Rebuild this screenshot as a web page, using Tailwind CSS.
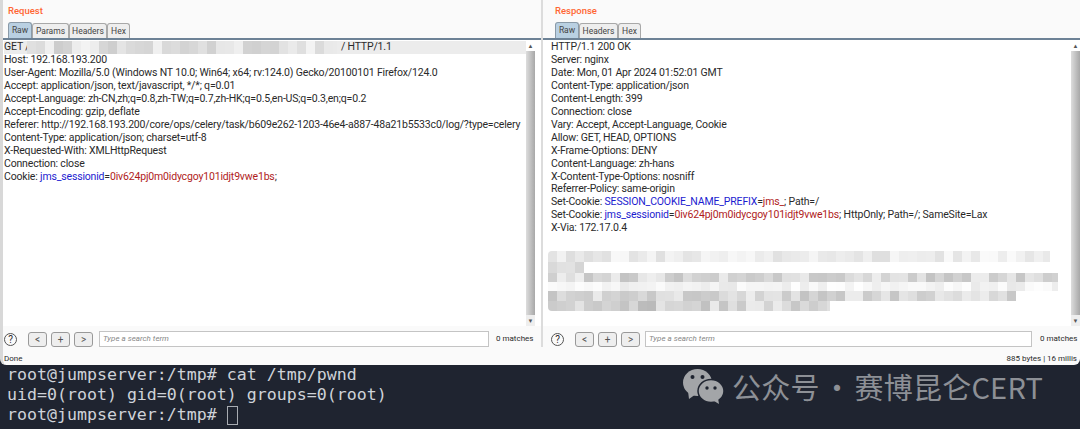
<!DOCTYPE html>
<html>
<head>
<meta charset="utf-8">
<script src="https://cdn.jsdelivr.net/npm/@tailwindcss/browser@4"></script>
</head>
<body class="w-[1080px] h-[429px] overflow-hidden bg-[#1f2430]">
<div class="relative flex flex-col h-[429px]">
  <!-- burp panels -->
  <div class="h-[365px] shrink-0 bg-[#fafafa] rounded-b-[6px] flex font-['Roboto'] text-[#2a2a2a] border-l-[3px] border-[#d8d8d8] overflow-hidden">
    <!-- request -->
    <div class="w-[538px] flex flex-col">
      <div class="h-[22px] pl-[5px] pt-[4px] text-[9.5px] font-medium text-[#ff6633]">Request</div>
      <div class="h-[16px] pl-[5px] flex items-end text-[8.5px] text-[#444]">
        <div class="h-[16px] w-[24px] flex items-center justify-center border border-[#8a9aa8] border-b-0 rounded-t-[3px] bg-[#b9d0e2]">Raw</div>
        <div class="h-[15px] w-[37px] flex items-center justify-center border border-[#a8a8a8] border-b-0 rounded-t-[3px] bg-[#eeeeee]">Params</div>
        <div class="h-[15px] w-[38px] flex items-center justify-center border border-[#a8a8a8] border-b-0 rounded-t-[3px] bg-[#eeeeee]">Headers</div>
        <div class="h-[15px] w-[23px] flex items-center justify-center border border-[#a8a8a8] border-b-0 rounded-t-[3px] bg-[#eeeeee]">Hex</div>
      </div>
      <div class="h-[2px] bg-[#6d8296]"></div>
      <div class="flex flex-1 relative bg-white">
        <div class="flex-1 pl-[1px] pt-[1px] text-[10.5px] tracking-[-0.17px] leading-[12.95px] whitespace-nowrap overflow-hidden">
          <div class="bg-[#ececec] h-[13px]">GET /a<span class="inline-block w-[306px]"></span>/ HTTP/1.1</div>
          <div>Host: 192.168.193.200</div>
          <div>User-Agent: Mozilla/5.0 (Windows NT 10.0; Win64; x64; rv:124.0) Gecko/20100101 Firefox/124.0</div>
          <div>Accept: application/json, text/javascript, */*; q=0.01</div>
          <div>Accept-Language: zh-CN,zh;q=0.8,zh-TW;q=0.7,zh-HK;q=0.5,en-US;q=0.3,en;q=0.2</div>
          <div>Accept-Encoding: gzip, deflate</div>
          <div>Referer: http://192.168.193.200/core/ops/celery/task/b609e262-1203-46e4-a887-48a21b5533c0/log/?type=celery</div>
          <div>Content-Type: application/json; charset=utf-8</div>
          <div>X-Requested-With: XMLHttpRequest</div>
          <div>Connection: close</div>
          <div>Cookie: <span class="text-[#1c1cd0]">jms_sessionid</span>=<span class="text-[#b01c1c]">0iv624pj0m0idycgoy101idjt9vwe1bs</span>;</div>
        </div>
        <div class="w-[9px] mr-[6px] flex flex-col">
          <div class="h-[11px] bg-white text-[6px] leading-[11px] text-center text-[#555]">▲</div>
          <div class="flex-1 bg-linear-to-r from-[#dddddd] to-[#a8a8a8]"></div>
          <div class="h-[11px] bg-[#eeeeee] text-[6px] leading-[11px] text-center text-[#555]">▼</div>
        </div>
      </div>
      <div class="h-[26px] flex items-center text-[8px]">
        <div class="w-[13px] h-[13px] ml-[1px] rounded-full border border-[#555] text-[10px] leading-[11px] text-center">?</div>
        <div class="ml-[11px] flex gap-[4px] text-[10px] text-[#555]">
          <div class="w-[19px] h-[15px] border border-[#999] rounded-[3px] bg-[#eeeeee] text-center leading-[13px]">&lt;</div>
          <div class="w-[19px] h-[15px] border border-[#999] rounded-[3px] bg-[#eeeeee] text-center leading-[13px]">+</div>
          <div class="w-[19px] h-[15px] border border-[#999] rounded-[3px] bg-[#eeeeee] text-center leading-[13px]">&gt;</div>
        </div>
        <div class="ml-[6px] w-[390px] h-[16px] border border-[#c4c4c4] bg-white pl-[3px] italic text-[#888] leading-[14px]">Type a search term</div>
        <div class="ml-[7px]">0 matches</div>
      </div>
      <div class="pl-[1px] text-[8px] pt-[1px]">Done</div>
    </div>
    <!-- divider -->
    <div class="w-[2px] h-[347px] bg-[#dcdcdc]"></div>
    <!-- response -->
    <div class="flex-1 flex flex-col">
      <div class="h-[22px] pl-[12px] pt-[4px] text-[9.5px] font-medium text-[#ff6633]">Response</div>
      <div class="h-[16px] pl-[12px] flex items-end text-[8.5px] text-[#444]">
        <div class="h-[16px] w-[24px] flex items-center justify-center border border-[#8a9aa8] border-b-0 rounded-t-[3px] bg-[#b9d0e2]">Raw</div>
        <div class="h-[15px] w-[39px] flex items-center justify-center border border-[#a8a8a8] border-b-0 rounded-t-[3px] bg-[#eeeeee]">Headers</div>
        <div class="h-[15px] w-[23px] flex items-center justify-center border border-[#a8a8a8] border-b-0 rounded-t-[3px] bg-[#eeeeee]">Hex</div>
      </div>
      <div class="h-[2px] bg-[#6d8296]"></div>
      <div class="flex flex-1 relative bg-white">
        <div class="flex-1 pl-[8px] pt-[1px] text-[10.5px] tracking-[-0.17px] leading-[12.95px] whitespace-nowrap overflow-hidden">
          <div>HTTP/1.1 200 OK</div>
          <div>Server: nginx</div>
          <div>Date: Mon, 01 Apr 2024 01:52:01 GMT</div>
          <div>Content-Type: application/json</div>
          <div>Content-Length: 399</div>
          <div>Connection: close</div>
          <div>Vary: Accept, Accept-Language, Cookie</div>
          <div>Allow: GET, HEAD, OPTIONS</div>
          <div>X-Frame-Options: DENY</div>
          <div>Content-Language: zh-hans</div>
          <div>X-Content-Type-Options: nosniff</div>
          <div>Referrer-Policy: same-origin</div>
          <div>Set-Cookie: <span class="text-[#1c1cd0]">SESSION_COOKIE_NAME_PREFIX</span>=<span class="text-[#b01c1c]">jms_</span>; Path=/</div>
          <div>Set-Cookie: <span class="text-[#1c1cd0]">jms_sessionid</span>=<span class="text-[#b01c1c]">0iv624pj0m0idycgoy101idjt9vwe1bs</span>; HttpOnly; Path=/; SameSite=Lax</div>
          <div>X-Via: 172.17.0.4</div>
        </div>
        <div class="w-[9px] flex flex-col">
          <div class="h-[11px] bg-white text-[6px] leading-[11px] text-center text-[#555]">▲</div>
          <div class="flex-1 bg-linear-to-r from-[#dddddd] to-[#a8a8a8]"></div>
          <div class="h-[11px] bg-[#eeeeee] text-[6px] leading-[11px] text-center text-[#555]">▼</div>
        </div>
      </div>
      <div class="h-[26px] flex items-center text-[8px]">
        <div class="w-[13px] h-[13px] ml-[8px] rounded-full border border-[#555] text-[10px] leading-[11px] text-center">?</div>
        <div class="ml-[11px] flex gap-[4px] text-[10px] text-[#555]">
          <div class="w-[19px] h-[15px] border border-[#999] rounded-[3px] bg-[#eeeeee] text-center leading-[13px]">&lt;</div>
          <div class="w-[19px] h-[15px] border border-[#999] rounded-[3px] bg-[#eeeeee] text-center leading-[13px]">+</div>
          <div class="w-[19px] h-[15px] border border-[#999] rounded-[3px] bg-[#eeeeee] text-center leading-[13px]">&gt;</div>
        </div>
        <div class="ml-[5px] w-[387px] h-[16px] border border-[#c4c4c4] bg-white pl-[3px] italic text-[#888] leading-[14px]">Type a search term</div>
        <div class="ml-[8px]">0 matches</div>
      </div>
      <div class="pr-[3px] text-right text-[8px] pt-[1px]">885 bytes | 16 millis</div>
    </div>
  </div>

  <!-- terminal -->
  <div class="flex-1 pl-[7px] font-['DejaVu_Sans_Mono'] text-[16.6px] leading-[20px] text-[#cfd3d9]">
    <div class="whitespace-pre">root@jumpserver:/tmp# cat /tmp/pwnd</div>
    <div class="whitespace-pre">uid=0(root) gid=0(root) groups=0(root)</div>
    <div class="whitespace-pre flex items-center">root@jumpserver:/tmp# <span class="inline-block w-[11px] h-[19px] border border-[#a8acb2]"></span></div>
  </div>

  <!-- watermark -->
  <div class="absolute left-[683px] top-[368px] flex items-center gap-[8px] text-[#8d9096]">
    <svg width="41" height="36" viewBox="0 0 41 36">
      <ellipse cx="14.500" cy="14.500" rx="14.500" ry="13.500" fill="#a3a5a8"/>
      <path d="M5 23l1 8 7-5z" fill="#a3a5a8"/>
      <ellipse cx="28" cy="23" rx="13" ry="11.500" fill="#a3a5a8" stroke="#1f2430" stroke-width="1.500"/>
      <path d="M31 33l5 3-1-6z" fill="#a3a5a8"/>
      <circle cx="9.500" cy="9" r="2" fill="#1f2430"/><circle cx="19.500" cy="9" r="2" fill="#1f2430"/>
      <circle cx="24" cy="20" r="1.700" fill="#1f2430"/><circle cx="32" cy="20" r="1.700" fill="#1f2430"/>
    </svg>
    <span class="font-['Noto_Sans_CJK_SC','Noto_Sans',sans-serif] text-[29px] leading-[33px] tracking-[0.2px] whitespace-nowrap">公众号<span class="inline-block w-[35px] text-center">·</span>赛博昆仑CERT</span>
  </div>

  <!-- redactions -->
  <div id="r1" class="absolute left-[27px] top-[41px] w-[310px] h-[13px] overflow-hidden flex"></div>
  <div id="r2" class="absolute left-[548px] top-[251px] w-[510px] h-[60px] overflow-hidden rounded-[4px] flex flex-col"></div>
</div>
<script>
  // pixelated redaction blocks, grey level computed from a small seed
  let seed = 7;
  function row(el, width, h, lo, hi) {
    const r = document.createElement('div');
    r.className = 'flex shrink-0';
    r.style.height = h + 'px';
    r.style.width = width + 'px';
    for (let x = 0; x < width; x += 9) {
      seed = (seed * 73 + 41) % 101;
      const g = lo + Math.round((hi - lo) * seed / 100);
      const d = document.createElement('div');
      d.style.width = Math.min(9, width - x) + 'px';
      d.style.height = h + 'px';
      d.style.background = 'rgb(' + g + ',' + g + ',' + g + ')';
      r.appendChild(d);
    }
    el.appendChild(r);
  }
  row(document.getElementById('r1'), 310, 13, 205, 245);
  const r2 = document.getElementById('r2');
  [[502, 11, 222, 250], [36, 11, 190, 235], [510, 9, 195, 240], [510, 9, 232, 254], [468, 10, 195, 240], [282, 10, 185, 235]]
    .forEach(a => row(r2, a[0], a[1], a[2], a[3]));
</script>
</body>
</html>
